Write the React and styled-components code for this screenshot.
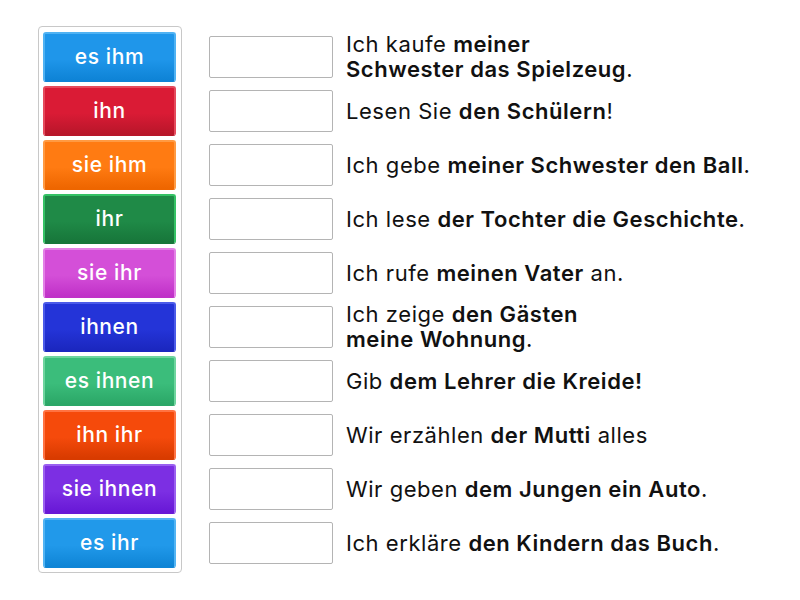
import React from "react";
import styled, { createGlobalStyle } from "styled-components";

const Global = createGlobalStyle`
  html, body { margin: 0; padding: 0; background: #fff; }
  body { font-family: Inter, "Noto Sans", sans-serif; }
`;

const Page = styled.div`
  display: flex;
  align-items: flex-start;
  padding: 26px 0 0 38px;
`;

const Panel = styled.div`
  display: flex;
  flex-direction: column;
  gap: 4px;
  width: 133px;
  padding: 5px 5px 4px 4px;
  border: 1px solid #c8c8c8;
  border-radius: 4px;
`;

const Chip = styled.div`
  height: 50px;
  box-sizing: border-box;
  display: flex;
  align-items: center;
  justify-content: center;
  border-radius: 3px;
  border: 2px solid ${(p) => p.$light};
  border-bottom-color: ${(p) => p.$dark};
  background: linear-gradient(to bottom, ${(p) => p.$base} 0%, ${(p) => p.$base} 55%, ${(p) => p.$dark} 100%);
  color: #fff;
  font-family: Inter, "Noto Sans", sans-serif;
  font-size: 21px;
  font-weight: 500;
  letter-spacing: 0.6px;
  padding-bottom: 2px;
`;

const Rows = styled.div`
  display: flex;
  flex-direction: column;
  gap: 4px;
  margin: 6px 0 0 27px;
`;

const Row = styled.div`
  height: 50px;
  display: flex;
  align-items: center;
  gap: 13px;
`;

const Slot = styled.div`
  width: 124px;
  height: 42px;
  box-sizing: border-box;
  border: 1px solid #b4b4b4;
  border-radius: 2px;
  background: #fff;
  flex-shrink: 0;
`;

const Sentence = styled.div`
  font-family: Inter, "Noto Sans", sans-serif;
  font-size: 22px;
  line-height: 25px;
  color: #111;
  white-space: nowrap;
  letter-spacing: 0.55px;
  b { font-weight: 600; }
`;

const chips = [
  { t: "es ihm", base: "#1f96ea", light: "#4fb2f3", dark: "#0e83d6" },
  { t: "ihn", base: "#da1b35", light: "#e54a5c", dark: "#b8162a" },
  { t: "sie ihm", base: "#ff7b12", light: "#ff9a42", dark: "#ee6600" },
  { t: "ihr", base: "#1f8a47", light: "#35c265", dark: "#17763a" },
  { t: "sie ihr", base: "#d44fd8", light: "#e381e6", dark: "#c031c8" },
  { t: "ihnen", base: "#2434d8", light: "#4b5be9", dark: "#1b27bf" },
  { t: "es ihnen", base: "#3bbd7b", light: "#6ed59e", dark: "#2ba767" },
  { t: "ihn ihr", base: "#f54a0b", light: "#ff7342", dark: "#d83b00" },
  { t: "sie ihnen", base: "#7c2fe3", light: "#9b60f0", dark: "#6818d6" },
  { t: "es ihr", base: "#2199ea", light: "#52b4f3", dark: "#0f85d6" },
];

const sentences = [
  <>Ich kaufe <b>meiner</b><br /><b>Schwester das Spielzeug</b>.</>,
  <>Lesen Sie <b>den Schülern</b>!</>,
  <>Ich gebe <b>meiner Schwester den Ball</b>.</>,
  <>Ich lese <b>der Tochter die Geschichte</b>.</>,
  <>Ich rufe <b>meinen Vater</b> an.</>,
  <>Ich zeige <b>den Gästen</b><br /><b>meine Wohnung</b>.</>,
  <>Gib <b>dem Lehrer die Kreide!</b></>,
  <>Wir erzählen <b>der Mutti</b> alles</>,
  <>Wir geben <b>dem Jungen ein Auto</b>.</>,
  <>Ich erkläre <b>den Kindern das Buch</b>.</>,
];

export default function App() {
  return (
    <>
      <Global />
      <Page>
        <Panel>
          {chips.map((c) => (
            <Chip key={c.t} $base={c.base} $light={c.light} $dark={c.dark}>
              {c.t}
            </Chip>
          ))}
        </Panel>
        <Rows>
          {sentences.map((s, i) => (
            <Row key={i}>
              <Slot />
              <Sentence>{s}</Sentence>
            </Row>
          ))}
        </Rows>
      </Page>
    </>
  );
}
